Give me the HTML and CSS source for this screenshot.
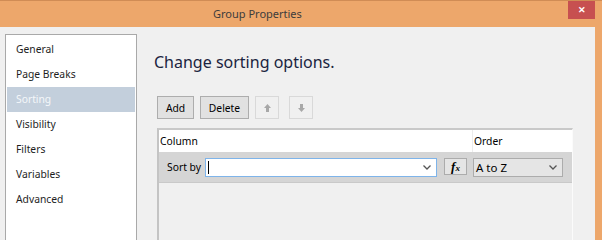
FILE: index.html
```html
<!DOCTYPE html>
<html lang="en">
<head>
    <meta charset="UTF-8">
    <title>Group Properties</title>
    <link rel="stylesheet" href="styles.css">
</head>
<body>
    <div class="window">
        <div class="titlebar">
            <span class="title">Group Properties</span>
            <span class="close">&#x2715;</span>
        </div>
        <div class="frame">
            <ul class="nav">
                <li>General</li>
                <li>Page Breaks</li>
                <li class="active">Sorting</li>
                <li>Visibility</li>
                <li>Filters</li>
                <li>Variables</li>
                <li>Advanced</li>
            </ul>
            <div class="main">
                <h1>Change sorting options.</h1>
                <div class="toolbar">
                    <button class="btn btn-add">Add</button>
                    <button class="btn btn-delete">Delete</button>
                    <button class="btn btn-arrow" disabled>
                        <svg width="7" height="8" viewBox="0 0 7 8"><polygon points="3.5,0 7,4 5,4 5,8 2,8 2,4 0,4" fill="#a8a8a8"/></svg>
                    </button>
                    <button class="btn btn-arrow btn-down" disabled>
                        <svg width="7" height="8" viewBox="0 0 7 8"><polygon points="3.5,8 7,4 5,4 5,0 2,0 2,4 0,4" fill="#a8a8a8"/></svg>
                    </button>
                </div>
                <div class="grid">
                    <div class="grid-head">
                        <div class="col-column">Column</div>
                        <div class="col-order">Order</div>
                    </div>
                    <div class="grid-row">
                        <span class="row-label">Sort by</span>
                        <div class="combo">
                            <span class="caret"></span>
                            <svg class="chev" width="8" height="5" viewBox="0 0 8 5"><polyline points="0.5,0.5 4,4 7.5,0.5" fill="none" stroke="#555" stroke-width="1.3"/></svg>
                        </div>
                        <button class="fx">f<span>x</span></button>
                        <div class="order-select">
                            <span>A to Z</span>
                            <svg class="chev" width="8" height="5" viewBox="0 0 8 5"><polyline points="0.5,0.5 4,4 7.5,0.5" fill="none" stroke="#555" stroke-width="1.3"/></svg>
                        </div>
                    </div>
                </div>
            </div>
        </div>
    </div>
</body>
</html>
```

FILE: styles.css
```css
body {
    margin: 0;
    width: 602px;
    height: 240px;
    overflow: hidden;
    font-family: "Noto Sans", "Open Sans", sans-serif;
    font-size: 10.3px;
    color: #000;
    background-color: #f0f0f0;
}
.window {
    display: flex;
    flex-direction: column;
    height: 240px;
    overflow: hidden;
}
.titlebar {
    display: flex;
    align-items: flex-start;
    flex-shrink: 0;
    height: 26px;
    background-color: #eda76b;
    border-top: 1px solid #d08c55;
}
.title {
    margin-left: 213px;
    margin-top: 5px;
    font-size: 11px;
    color: #3c3c3c;
}
.close {
    margin-left: auto;
    margin-right: 7px;
    width: 27px;
    height: 18px;
    background-color: #c75050;
    color: #fff;
    font-size: 9px;
    font-weight: bold;
    text-align: center;
    line-height: 18px;
}
.frame {
    flex: 1;
    display: flex;
    align-items: flex-start;
    min-height: 0;
    background-color: #f0f0f0;
    border-right: 7px solid #eda76b;
}
.nav {
    list-style: none;
    margin: 7px 0 0 5px;
    padding: 2px 1px;
    width: 128px;
    height: 260px;
    background-color: #fff;
    border: 1px solid #a9a9a9;
}
.nav li {
    height: 25px;
    line-height: 25px;
    padding-left: 9px;
    color: #1e1e1e;
}
.nav li.active {
    background-color: #c3cfdc;
    color: #f4f7fa;
}
.main {
    flex: 1;
    padding-left: 20px;
    padding-right: 22px;
}
h1 {
    margin: 24px 0 0 -3px;
    font-size: 16px;
    font-weight: normal;
    line-height: 22px;
    color: #1b2440;
}
.toolbar {
    display: flex;
    gap: 6px;
    margin-top: 23px;
}
.btn {
    height: 23px;
    margin: 0;
    padding: 0;
    font-family: inherit;
    font-size: 10.3px;
    color: #000;
    background-color: #e1e1e1;
    border: 1px solid #adadad;
}
.btn-add {
    width: 37px;
}
.btn-delete {
    width: 49px;
}
.btn-arrow {
    width: 24px;
    background-color: #f0f0f0;
    border-color: #d9d9d9;
    display: flex;
    align-items: center;
    justify-content: center;
}
.btn-down {
    margin-left: 4px;
}
.grid {
    margin-top: 9px;
    height: 200px;
    border-top: 2px solid #c9c9c9;
    border-left: 2px solid #c4c4c4;
    border-right: 1px solid #fbfbfb;
}
.grid-head {
    display: flex;
    height: 22px;
    line-height: 22px;
    background-color: #fff;
}
.col-column {
    width: 312px;
    padding-left: 1px;
    border-right: 1px solid #ececec;
}
.col-order {
    padding-left: 1px;
}
.grid-row {
    display: flex;
    align-items: center;
    height: 30px;
    background-color: #d5d5d5;
    border-bottom: 1px solid #c9c9c9;
}
.row-label {
    margin-left: 8px;
    width: 38px;
}
.combo {
    display: flex;
    align-items: center;
    width: 230px;
    height: 17px;
    background-color: #fff;
    border: 1px solid #7eb4ea;
}
.caret {
    margin-left: 2px;
    width: 1px;
    height: 13px;
    background-color: #000;
}
.chev {
    margin-left: auto;
    margin-right: 5px;
}
.fx {
    width: 23px;
    height: 17px;
    margin: 0 0 2px 7px;
    padding: 0;
    font-family: "Liberation Serif", serif;
    font-style: italic;
    font-weight: bold;
    font-size: 13px;
    background-color: #e5e5e5;
    border: 1px solid #acacac;
}
.fx span {
    font-size: 9px;
}
.order-select {
    display: flex;
    align-items: center;
    margin-left: 6px;
    width: 86px;
    height: 17px;
    padding-left: 2px;
    background-color: #e5e5e5;
    border: 1px solid #acacac;
    font-size: 11.5px;
}
.order-select .chev {
    margin-right: 5px;
}
```
